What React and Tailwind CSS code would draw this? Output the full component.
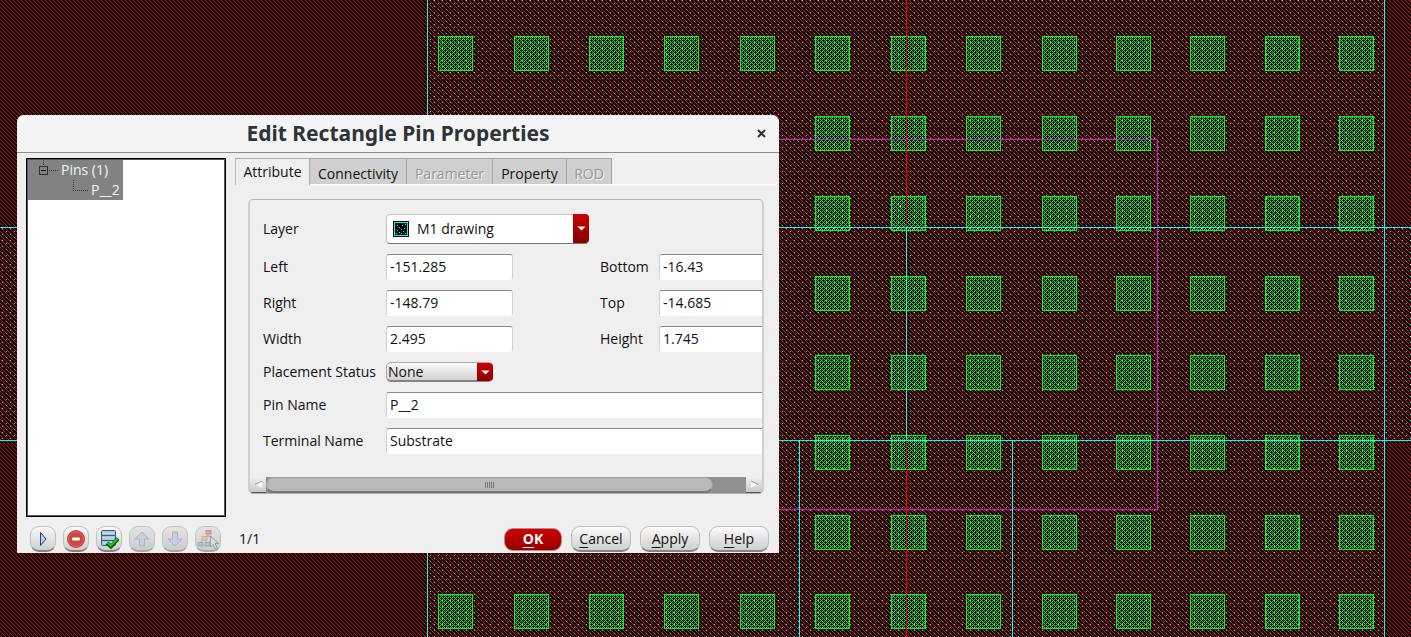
import React from "react";

const COLUMNS = [438, 514, 589, 664, 740, 815, 891, 966, 1042, 1116, 1190, 1265, 1339];
const ROWS = [36, 116, 196, 276, 355, 435, 515, 594];

function LayoutCanvas() {
  return (
    <svg className="absolute inset-0 h-full w-full" shapeRendering="crispEdges" aria-hidden="true">
      <defs>
        <pattern id="substrate" width="4" height="4" patternUnits="userSpaceOnUse">
          <rect width="4" height="4" fill="#000" />
          <path d="M1 0h1v1h-1zM2 1h1v1h-1zM3 2h1v1h-1zM0 3h1v1h-1z" fill="#e60c0c" />
        </pattern>
        <pattern id="metal" width="8" height="6" patternUnits="userSpaceOnUse">
          <path d="M2 0h1v1h-1zM6 3h1v1h-1z" fill="#00ffff" />
        </pattern>
        <pattern id="contact" width="4" height="4" patternUnits="userSpaceOnUse">
          <path
            d="M1 0h1v1h-1zM2 1h1v1h-1zM3 2h1v1h-1zM0 3h1v1h-1zM0 1h1v1h-1zM2 3h1v1h-1z"
            fill="#22f02e"
          />
        </pattern>
      </defs>
      <rect width="100%" height="100%" fill="url(#substrate)" />
      <rect x="427" y="0" width="957" height="100%" fill="url(#metal)" />
      <rect x="0" y="227" width="427" height="213" fill="url(#metal)" />
      <rect x="1384" y="227" width="100%" height="213" fill="url(#metal)" />
      {ROWS.map((y) =>
        COLUMNS.map((x) => (
          <g key={`${x}-${y}`}>
            <rect x={x} y={y} width="35" height="35" fill="#000" />
            <rect x={x} y={y} width="35" height="35" fill="url(#contact)" />
            <rect x={x} y={y} width="35" height="35" fill="url(#metal)" />
            <path d={`M${x} ${y}h35v35h-35zM${x + 1} ${y + 1}v33h33v-33z`} fill="#00ff00" fillRule="evenodd" />
          </g>
        ))
      )}
      <path d="M427 139h731v371h-731v-1h730v-369h-730z" fill="#e010e0" />
      <rect x="906" y="0" width="1" height="100%" fill="#ff0000" />
      <rect x="906" y="227" width="1" height="213" fill="#00ffff" />
      <rect x="0" y="227" width="100%" height="1" fill="#00ffff" />
      <rect x="0" y="440" width="100%" height="1" fill="#00ffff" />
      <rect x="427" y="0" width="1" height="100%" fill="#00ffff" />
      <rect x="1384" y="0" width="1" height="100%" fill="#00ffff" />
      <rect x="799" y="440" width="1" height="100%" fill="#00ffff" />
      <rect x="1012" y="440" width="1" height="100%" fill="#00ffff" />
      <rect x="900" y="205" width="1" height="2" fill="#fff" />
    </svg>
  );
}

function Field({ id, label, value, labelClass, inputClass }) {
  return (
    <>
      <label htmlFor={id} className={`shrink-0 ${labelClass}`}>{label}</label>
      <input
        id={id}
        defaultValue={value}
        className={`h-[26px] shrink-0 rounded-[3px] border border-[#d0d0d0] border-t-[#8a8a8a] border-b-white bg-white px-[3px] pb-px outline-none ${inputClass}`}
      />
    </>
  );
}

function Arrow() {
  return (
    <svg width="9" height="5" viewBox="0 0 9 5" aria-hidden="true">
      <path d="M0.5 0.5h8l-4 4z" fill="#fff" />
    </svg>
  );
}

function ToolButton({ label, disabled, children }) {
  return (
    <button
      aria-label={label}
      disabled={disabled}
      className={`flex h-[26px] w-[26px] items-center justify-center rounded-[9px] border border-b-2 ${
        disabled
          ? "border-[#c4c4c4] border-b-[#a8a8a8] bg-linear-to-b from-[#e4e4e4] to-[#cccccc]"
          : "border-[#c0c0c0] border-b-[#858585] bg-linear-to-b from-[#fafafa] to-[#cfcfcf]"
      }`}
    >
      {children}
    </button>
  );
}

function DialogButton({ mnemonic, rest }) {
  return (
    <button className="h-[26px] w-[60px] rounded-[9px] border border-b-2 border-[#bdbdbd] border-b-[#858585] bg-linear-to-b from-[#fbfbfb] to-[#cecece] leading-[22px]">
      <span className="underline decoration-1 underline-offset-[3px]">{mnemonic}</span>{rest}
    </button>
  );
}

const TABS = [
  { name: "Connectivity", width: "w-[97px]" },
  { name: "Parameter", width: "w-[86px]", disabled: true },
  { name: "Property", width: "w-[74px]" },
  { name: "ROD", width: "w-[45px]", disabled: true },
];

function PinTree() {
  return (
    <div className="w-[200px] shrink-0 border-2 border-black bg-white outline -outline-offset-2 outline-[#555]">
      <ul className="relative w-[95px] bg-[#828282] leading-5 text-[#eef5f5]">
        <svg className="absolute top-0 left-0" width="70" height="40" shapeRendering="crispEdges" aria-hidden="true">
          <path d="M15.5 0v6M21 10.500h9M45.500 20v10.500h15" fill="none" stroke="#333" strokeDasharray="1 1" />
          <rect x="11.500" y="6.500" width="8" height="8" fill="none" stroke="#333" />
          <path d="M13 10.500h5" stroke="#000" />
        </svg>
        <li className="h-5 pl-[33px]">Pins (1)</li>
        <li className="h-5 pl-[63px]">P__2</li>
      </ul>
    </div>
  );
}

function AttributePanel() {
  return (
    <div className="mr-[15px] ml-[13px] flex h-[295px] flex-col overflow-hidden rounded-[5px] border-2 border-y border-[#cfcfcf] border-t-[#b4b4b4] border-b-[#b0b0b0]">
      <div className="flex flex-1 flex-col gap-[10px] overflow-hidden pt-[14px] pl-[13px]">
        <div className="flex h-[30px] shrink-0 items-center">
          <label htmlFor="layer" className="w-[123px] shrink-0">Layer</label>
          <div className="relative h-[30px] w-[203px]">
            <select id="layer" className="h-full w-full appearance-none rounded-[4px] border border-[#c4c4c4] border-b-[#777] bg-white pl-[30px] outline-none">
              <option>M1 drawing</option>
            </select>
            <svg className="absolute top-[7px] left-[7px]" width="16" height="16" shapeRendering="crispEdges" aria-hidden="true">
              <rect width="16" height="16" fill="#000" />
              <rect x="1.500" y="1.500" width="13" height="13" fill="#000" stroke="#00ffff" />
              <path d="M4 4h1v1h-1zM9 4h1v1h-1zM12 3h1v1h-1zM6 6h1v1h-1zM11 7h1v1h-1zM4 9h1v1h-1zM8 8h1v1h-1zM6 11h1v1h-1zM10 10h1v1h-1zM12 12h1v1h-1zM3 12h1v1h-1zM8 12h1v1h-1z" fill="#00ffff" />
            </svg>
            <span className="pointer-events-none absolute top-0 right-0 flex h-[29px] w-4 items-center justify-center rounded-r-[4px] bg-linear-to-b from-[#cc0000] to-[#850000]"><Arrow /></span>
          </div>
        </div>
        <div className="flex h-[26px] shrink-0 items-center">
          <Field id="left" label="Left" value="-151.285" labelClass="w-[123px]" inputClass="w-[127px] mr-[87px]" />
          <Field id="bottom" label="Bottom" value="-16.43" labelClass="w-[59px]" inputClass="w-[127px]" />
        </div>
        <div className="flex h-[26px] shrink-0 items-center">
          <Field id="right" label="Right" value="-148.79" labelClass="w-[123px]" inputClass="w-[127px] mr-[87px]" />
          <Field id="top" label="Top" value="-14.685" labelClass="w-[59px]" inputClass="w-[127px]" />
        </div>
        <div className="flex h-[26px] shrink-0 items-center">
          <Field id="width" label="Width" value="2.495" labelClass="w-[123px]" inputClass="w-[127px] mr-[87px]" />
          <Field id="height" label="Height" value="1.745" labelClass="w-[59px]" inputClass="w-[127px]" />
        </div>
        <div className="flex h-5 shrink-0 items-center">
          <label htmlFor="placement" className="w-[123px] shrink-0">Placement Status</label>
          <div className="relative h-5 w-[107px]">
            <select id="placement" className="block h-full w-full appearance-none rounded-[5px] border border-[#aaa] border-b-2 border-b-[#858585] bg-linear-to-b from-[#fafafa] to-[#d2d2d2] pl-[1px] leading-4 outline-none">
              <option>None</option>
            </select>
            <span className="pointer-events-none absolute top-px right-0 flex h-[18px] w-4 items-center justify-center rounded-r-[4px] bg-linear-to-b from-[#cc0000] to-[#8c0000]"><Arrow /></span>
          </div>
        </div>
        <div className="flex h-[26px] shrink-0 items-center">
          <Field id="pin" label="Pin Name" value="P__2" labelClass="w-[123px]" inputClass="w-[400px]" />
        </div>
        <div className="flex h-[26px] shrink-0 items-center">
          <Field id="terminal" label="Terminal Name" value="Substrate" labelClass="w-[123px]" inputClass="w-[400px]" />
        </div>
      </div>
      <div className="flex h-[16px] shrink-0 bg-[#909090]">
        <button aria-label="Scroll left" className="flex w-[16px] items-center justify-center border-b border-[#555] bg-linear-to-b from-[#f0f0f0] to-[#c8c8c8]">
          <svg width="9" height="9" viewBox="0 0 9 9" aria-hidden="true"><path d="M8 1v7L1 4.500z" fill="#f6f6f6" /><path d="M8 1L1 4.500" stroke="#999" /></svg>
        </button>
        <div className="flex w-[447px] items-center justify-center gap-px rounded-full border border-[#a0a0a0] border-b-2 border-b-[#777] bg-[#b9b9b9]">
          <i className="h-[6px] w-px bg-[#777]" /><i className="h-[6px] w-px bg-[#777]" /><i className="h-[6px] w-px bg-[#777]" /><i className="h-[6px] w-px bg-[#777]" /><i className="h-[6px] w-px bg-[#777]" />
        </div>
        <button aria-label="Scroll right" className="ml-auto flex w-[16px] items-center justify-center border-b border-[#555] bg-linear-to-b from-[#f0f0f0] to-[#c8c8c8]">
          <svg width="9" height="9" viewBox="0 0 9 9" aria-hidden="true"><path d="M1 1v7L8 4.500z" fill="#f6f6f6" /><path d="M1 1L8 4.500" stroke="#999" /></svg>
        </button>
      </div>
    </div>
  );
}

function Footer() {
  return (
    <footer className="flex items-center pt-[9px] pr-[10px] pb-px pl-[13px]">
      <div className="flex gap-[7px]">
        <ToolButton label="Show fields">
          <svg width="18" height="18" viewBox="0 0 18 18"><path d="M6.500 2.500v13l5.500-6.500z" fill="#b9cdf0" stroke="#263f80" /></svg>
        </ToolButton>
        <ToolButton label="Remove pin">
          <svg width="20" height="20" viewBox="0 0 20 20"><circle cx="10" cy="10" r="9" fill="#c93c3c" /><circle cx="10" cy="10" r="7.500" fill="#cf4545" stroke="#dc6a6a" /><rect x="6" y="8.500" width="8" height="3" rx="1" fill="#fff" /></svg>
        </ToolButton>
        <ToolButton label="Save pin">
          <svg width="20" height="20" viewBox="0 0 20 20"><rect x="2.500" y="1.500" width="14" height="15" rx="1" fill="#a9c2d8" stroke="#3c5c7c" /><path d="M3 6.500h13M3 11.500h13" stroke="#3c5c7c" /><path d="M4 4h11M4 9h11M4 14h11" stroke="#d6e5f0" /><path d="M8 14l4 3.500 7-8" fill="none" stroke="#075e07" strokeWidth="4" /><path d="M8.500 14l3.500 2.500 6.500-7" fill="none" stroke="#1fc51f" strokeWidth="2" /></svg>
        </ToolButton>
        <ToolButton label="Previous pin" disabled>
          <svg width="18" height="18" viewBox="0 0 18 18"><path d="M9 2l7 7h-4.500v7h-5V9H2z" fill="#c7d1dc" stroke="#a9b5c3" /></svg>
        </ToolButton>
        <ToolButton label="Next pin" disabled>
          <svg width="18" height="18" viewBox="0 0 18 18"><path d="M9 16L2 9h4.500V2h5v7H16z" fill="#c7d1dc" stroke="#a9b5c3" /></svg>
        </ToolButton>
        <ToolButton label="Select in hierarchy" disabled>
          <svg className="shrink-0" width="24" height="22" viewBox="0 0 24 22"><path d="M12 6v3M8 10l3-2h2l4 3M7 12l-3 3M9 12l2 3" fill="none" stroke="#b0a8a8" /><rect x="10" y="2.500" width="5" height="3.500" fill="#e2a5a5" stroke="#cf9292" /><rect x="6" y="8.500" width="5" height="3.500" fill="#e7c8a5" stroke="#cfae8c" /><path d="M2 14.500h5v3.500h-5zM9 14.500h5v3.500h-5z" fill="#b5c3d6" stroke="#97a8c0" /><path d="M14.500 8v11l2.500-2.500 2 4 2-1-2-4h3.500z" fill="#ddd" stroke="#999" /></svg>
        </ToolButton>
      </div>
      <span className="ml-[18px]">1/1</span>
      <div className="ml-auto flex items-center gap-[9px]">
        <button className="h-[23px] w-[58px] rounded-[9px] border border-[#b88] bg-linear-to-b from-[#d00000] to-[#960000] leading-5 font-bold text-white">
          <span className="underline decoration-1 underline-offset-[3px]">O</span>K
        </button>
        <DialogButton mnemonic="C" rest="ancel" />
        <DialogButton mnemonic="A" rest="pply" />
        <DialogButton mnemonic="H" rest="elp" />
      </div>
    </footer>
  );
}

export default function App() {
  return (
    <main className="relative min-h-screen overflow-hidden bg-black font-['Open_Sans','Noto_Sans',sans-serif] text-sm text-[#111]">
      <LayoutCanvas />
      <section role="dialog" aria-labelledby="dialog-title" className="absolute top-[115px] left-[17px] w-[762px] rounded-t-[7px] bg-[#efefef]">
        <header className="relative flex h-[38px] items-center justify-center rounded-t-[7px] border-b border-[#8d8d88] bg-[#f4f4f4] pb-[2px]">
          <h1 id="dialog-title" className="font-['Noto_Sans',sans-serif] text-[21px] font-bold text-[#2e3436]">Edit Rectangle Pin Properties</h1>
          <button aria-label="Close" className="absolute top-3 right-3 flex h-3 w-3 items-center justify-center">
            <svg width="9" height="9" viewBox="0 0 9 9"><path d="M1 1l7 7M8 1L1 8" stroke="#2e3436" strokeWidth="2" /></svg>
          </button>
        </header>
        <div className="flex gap-[9px] pt-[5px] pl-[9px]">
          <PinTree />
          <div className="flex h-[359px] min-w-0 flex-1 flex-col">
            <div role="tablist" className="mr-[2px] flex h-[27px] border-b border-white">
              <button role="tab" aria-selected="true" className="h-[27px] w-[75px] border-t border-r border-l border-[#aaa] border-l-[#bbb] bg-[#efefef] text-center">Attribute</button>
              {TABS.map((tab) => (
                <button
                  key={tab.name}
                  role="tab"
                  aria-selected="false"
                  disabled={tab.disabled}
                  className={`h-[26px] border-t border-r border-[#a5a5a5] bg-[#cfcfcf] pt-1 text-center ${tab.width} ${
                    tab.disabled ? "text-[#969696] [text-shadow:1px_1px_0_#f4f4f4]" : ""
                  }`}
                >
                  {tab.name}
                </button>
              ))}
            </div>
            <div className="pt-[14px]"><AttributePanel /></div>
          </div>
        </div>
        <Footer />
      </section>
    </main>
  );
}
